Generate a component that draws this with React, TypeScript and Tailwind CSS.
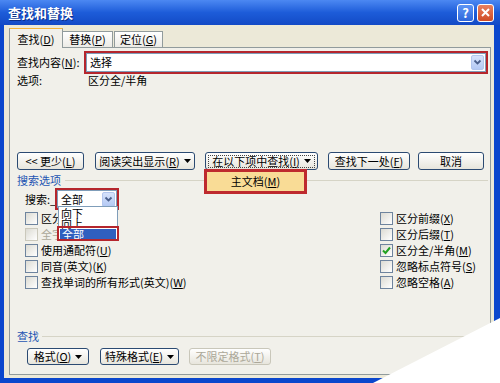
import React from "react";

const Arrow = () => (
  <span className="ml-auto mr-[1px] flex h-[15px] w-[13px] items-center justify-center rounded-[2px] border border-[#B3C6EE] bg-gradient-to-b from-[#D6E2FB] to-[#B4C9F4]">
    <svg width="9" height="7" viewBox="0 0 9 7">
      <path d="M1.5 1.5 L4.5 4.5 L7.5 1.5" fill="none" stroke="#4A5F8C" strokeWidth="1.8" />
    </svg>
  </span>
);

const Tri = () => (
  <svg width="7" height="4" viewBox="0 0 7 4" className="ml-[4px]">
    <path d="M0 0 H7 L3.5 4 Z" fill="#000" />
  </svg>
);

function Btn({ className, children, disabled, focus }: { className: string; children: React.ReactNode; disabled?: boolean; focus?: boolean }) {
  return (
    <div
      className={
        "flex items-center justify-center rounded-[3px] border bg-gradient-to-b from-white to-[#E7E5DC] " +
        (disabled ? "border-[#C9C7BA] text-[#ACA899] " : "border-[#2B4A72] text-black ") +
        className
      }
    >
      <span className={focus ? "flex items-center px-[3px] outline outline-1 outline-dotted outline-[#444]" : "flex items-center"}>{children}</span>
    </div>
  );
}

function Check({ children, checked, disabled }: { children: React.ReactNode; checked?: boolean; disabled?: boolean }) {
  return (
    <div className={"flex h-[16px] items-center " + (disabled ? "text-[#ACA899]" : "")}>
      <span
        className={
          "flex h-[13px] w-[13px] items-center justify-center border bg-gradient-to-br from-[#DCDBD3] to-white " +
          (disabled ? "border-[#CAC8BB]" : "border-[#6E849E]")
        }
      >
        {checked && (
          <svg width="9" height="9" viewBox="0 0 9 9">
            <path d="M1 4.5 L3.5 7 L8 1.5" fill="none" stroke="#21A121" strokeWidth="2" />
          </svg>
        )}
      </span>
      <span className="ml-[3px] whitespace-nowrap">{children}</span>
    </div>
  );
}

export default function App() {
  return (
    <div className="relative flex h-[383px] w-[500px] flex-col overflow-hidden bg-[#0B47CD] font-['Noto_Sans_CJK_SC','Liberation_Sans',sans-serif] text-[11px] leading-none text-black">
      {/* title bar */}
      <div className="flex h-[25px] items-center bg-gradient-to-b from-[#4C88F2] via-[#1D5CD9] to-[#134AC6] pl-[8px] pr-[6px]">
        <span className="text-[13px] font-bold text-white [text-shadow:1px_1px_0_#0B2F8A]">查找和替换</span>
        <div className="ml-auto flex items-center gap-[3px]">
          <div className="flex h-[18px] w-[17px] items-center justify-center rounded-[3px] border border-white bg-gradient-to-b from-[#5E95F5] to-[#2D66DB] text-[13px] font-bold text-white">
            ?
          </div>
          <div className="flex h-[18px] w-[17px] items-center justify-center rounded-[3px] border border-white bg-gradient-to-b from-[#E9805E] to-[#CF4B24]">
            <svg width="9" height="9" viewBox="0 0 9 9">
              <path d="M1 1 L8 8 M8 1 L1 8" stroke="#fff" strokeWidth="2" />
            </svg>
          </div>
        </div>
      </div>

      {/* body */}
      <div className="flex-1 border-b-[5px] border-l-[4px] border-r-[6px] border-[#0B47CD] bg-[#ECE9D8] pl-[5px]">
        {/* tabs */}
        <div className="mt-[3px] flex items-end">
          <div className="relative z-10 -mb-px flex h-[20px] w-[54px] items-center justify-center border border-b-0 border-[#919B9C] border-t-[#F5B43A] bg-[#F1F0EA] pt-[1px]">
            查找(<u>D</u>)
          </div>
          <div className="flex h-[16px] w-[50px] items-center justify-center border border-l-0 border-b-0 border-[#919B9C] bg-gradient-to-b from-white to-[#ECEBE6]">
            替换(<u>P</u>)
          </div>
          <div className="ml-px flex h-[16px] w-[49px] items-center justify-center border border-b-0 border-[#919B9C] bg-gradient-to-b from-white to-[#ECEBE6]">
            定位(<u>G</u>)
          </div>
        </div>

        {/* panel */}
        <div className="relative h-[328px] w-[482px] border border-[#919B9C] bg-[#F1F0EA]">
          {/* find what */}
          <div className="mt-[3px] flex h-[23px] items-center pl-[7px]">
            <span className="w-[67px] whitespace-nowrap">查找内容(<u>N</u>):</span>
            <div className="h-[23px] w-[404px] border-2 border-[#B5262D]">
              <div className="flex h-full items-center border border-[#7F9DB9] bg-white pl-[3px]">
                <span>选择</span>
                <Arrow />
              </div>
            </div>
          </div>
          <div className="flex h-[12px] items-center pl-[7px]">
            <span className="w-[71px]">选项:</span>
            <span>区分全/半角</span>
          </div>

          {/* buttons */}
          <div className="mt-[66px] flex h-[18px] pl-[7px]">
            <Btn className="w-[67px]">&lt;&lt; 更少(<u>L</u>)</Btn>
            <Btn className="ml-[11px] w-[100px]">
              阅读突出显示(<u>R</u>)<Tri />
            </Btn>
            <Btn className="ml-[10px] w-[113px]" focus>
              在以下项中查找(<u>I</u>)<Tri />
            </Btn>
            <Btn className="ml-[10px] w-[82px]">查找下一处(<u>F</u>)</Btn>
            <Btn className="ml-[8px] w-[66px]">取消</Btn>
          </div>

          {/* search options */}
          <div className="mt-[2px] flex h-[16px] items-center pl-[7px]">
            <span className="text-[#1E55B3]">搜索选项</span>
            <div className="ml-[4px] mr-[2px] h-px flex-1 bg-[#D6D4C6]" />
          </div>
          <div className="flex h-[22px] items-center pl-[15px]">
            <span className="w-[30px] whitespace-nowrap">搜索:_</span>
            <div className="h-[22px] w-[64px] border-2 border-[#B5262D]">
              <div className="flex h-full items-center border border-[#7F9DB9] bg-white pl-[3px]">
                <span>全部</span>
                <Arrow />
              </div>
            </div>
          </div>

          <div className="grid grid-cols-[355px_1fr] pl-[15px]">
            <div className="flex flex-col">
              <Check>区分大小写(<u>H</u>)</Check>
              <Check disabled>全字匹配(<u>Y</u>)</Check>
              <Check>使用通配符(<u>U</u>)</Check>
              <Check>同音(英文)(<u>K</u>)</Check>
              <Check>查找单词的所有形式(英文)(<u>W</u>)</Check>
            </div>
            <div className="flex flex-col">
              <Check>区分前缀(<u>X</u>)</Check>
              <Check>区分后缀(<u>T</u>)</Check>
              <Check checked>区分全/半角(<u>M</u>)</Check>
              <Check>忽略标点符号(<u>S</u>)</Check>
              <Check>忽略空格(<u>A</u>)</Check>
            </div>
          </div>

          {/* find group */}
          <div className="mt-[39px] flex h-[14px] items-center pl-[7px]">
            <span className="text-[#1E55B3]">查找</span>
            <div className="ml-[3px] mr-[2px] h-px flex-1 bg-[#D6D4C6]" />
          </div>
          <div className="mt-[5px] flex h-[17px] pl-[17px]">
            <Btn className="w-[62px]">
              格式(<u>O</u>)<Tri />
            </Btn>
            <Btn className="ml-[11px] w-[79px]">
              特殊格式(<u>E</u>)<Tri />
            </Btn>
            <Btn className="ml-[10px] w-[82px]" disabled>
              不限定格式(<u>T</u>)
            </Btn>
          </div>

          {/* dropdown: 在以下项中查找 */}
          <div className="absolute left-[194px] top-[121px] flex h-[25px] w-[103px] items-center justify-center border-[3px] border-[#BE2A2E] bg-[#F9DC96]">
            主文档(<u>M</u>)
          </div>

          {/* dropdown: 搜索 */}
          <div className="absolute left-[48px] top-[158px] h-[35px] w-[60px] border border-[#7F9DB9] bg-white pt-[1px]">
            <div className="h-[10px] pl-[2px] leading-[10px]">向下</div>
            <div className="h-[10px] pl-[2px] leading-[10px]">向上</div>
            <div className="mx-px mt-px h-[11px] bg-[#2F5FBF] pl-[2px] leading-[11px] text-white">全部</div>
          </div>
          <div className="absolute left-[47px] top-[178px] h-[15px] w-[62px] border-2 border-[#B5262D]" />
        </div>
      </div>

      {/* page curl corner */}
      <svg className="pointer-events-none absolute left-0 top-0" width="500" height="383" viewBox="0 0 500 383">
        <polygon points="373,383 500,383 500,318" fill="#fff" />
      </svg>
    </div>
  );
}
